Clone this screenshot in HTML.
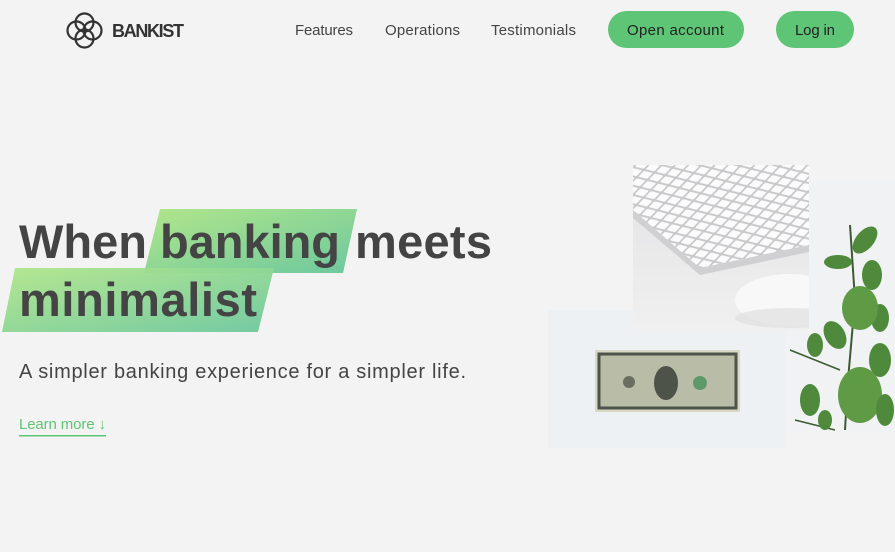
<!DOCTYPE html>
<html><head><meta charset="utf-8"><style>
html,body{margin:0;padding:0;width:895px;height:552px;overflow:hidden;background:#f3f3f3;font-family:"Liberation Sans",sans-serif;}
svg{position:absolute;left:0;top:0}
</style></head><body>
<svg width="895" height="552" viewBox="0 0 895 552" xmlns="http://www.w3.org/2000/svg" font-family="Liberation Sans, sans-serif">
<defs>
<linearGradient id="g" x1="0" y1="0" x2="1" y2="1">
<stop offset="0" stop-color="#b1e68b"/><stop offset="1" stop-color="#6dc89e"/>
</linearGradient>
<linearGradient id="kb" x1="0" y1="0" x2="0" y2="1"><stop offset="0" stop-color="#e2e2e4"/><stop offset="1" stop-color="#f0f0f0"/></linearGradient>
<pattern id="keys" width="11" height="9" patternUnits="userSpaceOnUse" patternTransform="rotate(14) skewX(-30)">
<rect width="11" height="9" fill="#c9c9cc"/><rect x="1" y="1" width="9" height="7" rx="1" fill="#fbfbfb"/>
</pattern>
<clipPath id="kc"><rect x="633" y="165" width="176" height="165"/></clipPath>
</defs>
<!-- logo -->
<g fill="none" stroke="#333" stroke-width="2.2">
<circle cx="84.5" cy="22.5" r="9"/><circle cx="84.5" cy="38.5" r="9"/><circle cx="76.5" cy="30.5" r="9"/><circle cx="92.5" cy="30.5" r="9"/>
</g>
<text x="112" y="37" font-size="18" font-weight="bold" fill="#333" textLength="72">BANKIST</text>
<!-- nav -->
<g font-size="15" fill="#444">
<text x="295" y="35" textLength="58">Features</text>
<text x="385" y="35" textLength="75">Operations</text>
<text x="491" y="35" textLength="85">Testimonials</text>
</g>
<rect x="608" y="11" width="136" height="37" rx="18.5" fill="#5ec576"/>
<text x="627" y="35" font-size="15" fill="#222" textLength="97">Open account</text>
<rect x="776" y="11" width="78" height="37" rx="18.5" fill="#5ec576"/>
<text x="795" y="35" font-size="15" fill="#222" textLength="40">Log in</text>
<!-- highlights -->
<polygon points="160,209 357,209 343,273 144,273" fill="url(#g)"/>
<polygon points="15,268 274,268 258,332 2,332" fill="url(#g)" opacity="0.95"/>
<g font-size="47" font-weight="bold" fill="#444">
<text x="19" y="258" textLength="128">When</text>
<text x="160" y="258" textLength="180">banking</text>
<text x="355" y="258" textLength="137">meets</text>
<text x="19" y="316" textLength="238">minimalist</text>
</g>
<text x="19" y="378" font-size="20" fill="#444" textLength="447">A simpler banking experience for a simpler life.</text>
<text x="19" y="429" font-size="15" fill="#5ec576" textLength="87">Learn more ↓</text>
<rect x="19" y="435" width="87" height="1.5" fill="#5ec576"/>
<!-- images -->
<rect x="548" y="310" width="238" height="138" fill="#edf1f4"/>
<rect x="785" y="180" width="110" height="252" fill="#f0f2f3"/>
<rect x="633" y="165" width="176" height="165" fill="url(#kb)"/>
<g clip-path="url(#kc)">
<polygon points="633,165 809,165 809,245 700,268 633,210" fill="url(#keys)"/>
<polygon points="633,210 700,268 809,245 809,252 700,275 633,218" fill="#d0d0d2"/>
<ellipse cx="790" cy="300" rx="55" ry="26" fill="#f8f8f8"/>
<ellipse cx="790" cy="318" rx="55" ry="10" fill="#dcdcdc" opacity="0.6"/>
</g>
<!-- dollar -->
<rect x="595" y="350" width="145" height="62" fill="#d8d8c4"/>
<rect x="599" y="354" width="137" height="54" fill="#b9bca7" stroke="#4d524a" stroke-width="3"/>
<ellipse cx="666" cy="383" rx="12" ry="17" fill="#4e5349"/>
<circle cx="629" cy="382" r="6" fill="#6a6e60"/>
<circle cx="700" cy="383" r="7" fill="#5d9a6a"/>
<!-- plant -->
<path d="M850 225 L855 300 L848 380 L845 430" stroke="#3d5a34" stroke-width="2" fill="none"/>
<path d="M790 350 L840 370 M795 420 L835 430" stroke="#3d5a34" stroke-width="1.5" fill="none"/>
<g fill="#4f8a3c">
<ellipse cx="865" cy="240" rx="9" ry="16" transform="rotate(40 865 240)"/>
<ellipse cx="838" cy="262" rx="14" ry="7"/>
<ellipse cx="872" cy="275" rx="10" ry="15"/>
<ellipse cx="880" cy="318" rx="9" ry="14"/>
<ellipse cx="860" cy="308" rx="18" ry="22" fill="#5f9a45"/>
<ellipse cx="835" cy="335" rx="10" ry="15" transform="rotate(-30 835 335)"/>
<ellipse cx="880" cy="360" rx="11" ry="17"/>
<ellipse cx="860" cy="395" rx="22" ry="28" fill="#5f9a45"/>
<ellipse cx="815" cy="345" rx="8" ry="12"/>
<ellipse cx="810" cy="400" rx="10" ry="16"/>
<ellipse cx="885" cy="410" rx="9" ry="16"/>
<ellipse cx="825" cy="420" rx="7" ry="10"/>
</g>
</svg>
</body></html>
